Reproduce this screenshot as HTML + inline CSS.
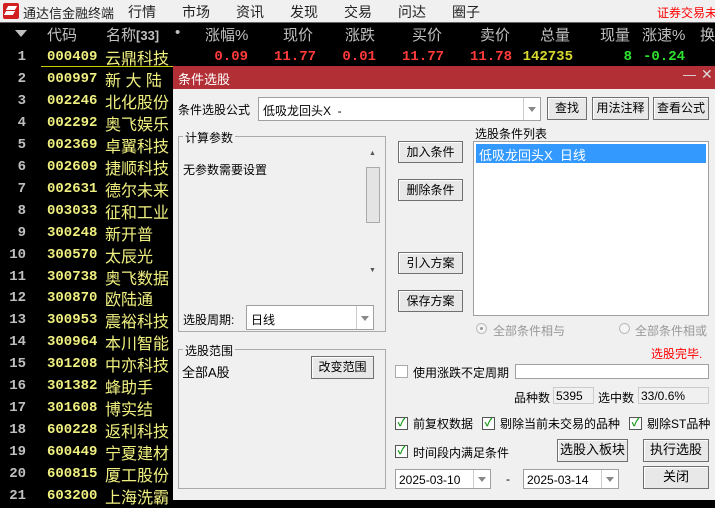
<!DOCTYPE html>
<html><head><meta charset="utf-8"><style>
*{margin:0;padding:0;box-sizing:border-box}
body{width:715px;height:504px;overflow:hidden;background:#000;font-family:"Liberation Sans","Noto Sans CJK SC",sans-serif;position:relative}
.a{position:absolute;white-space:nowrap}
.menu{left:0;top:0;width:715px;height:22px;background:#f0f0f0;font-size:13px;color:#222}
.hdr{font-size:15px;color:#c0c0c0}
.num{font-family:"Liberation Mono","DejaVu Sans Mono",monospace;font-weight:bold;font-size:14px}
.r{text-align:right}
.dlg{left:173px;top:66px;width:542px;height:434px;background:#f0f0f0;font-size:12px;color:#000}
.btn{position:absolute;background:#e8e8e8;border:1px solid #707070;box-shadow:inset 1px 1px 0 #fff;font-size:12px;text-align:center;line-height:20px}
.box{position:absolute;border:1px solid #aaa}
.inp{position:absolute;background:#fff;border:1px solid #a0a0a0}
.dd{position:absolute;right:0;top:0;bottom:0;width:17px;border-left:1px solid #ccc}
.dd:after{content:"";position:absolute;left:4px;top:50%;margin-top:-2px;border-left:4px solid transparent;border-right:4px solid transparent;border-top:5px solid #888}
.cb{position:absolute;width:13px;height:13px;border:1px solid #555;background:#fff;color:#1a9a1a;font-size:11px;line-height:11px;text-align:center;font-weight:bold}
</style></head><body>
<div class="a menu">
 <div class="a" style="left:3px;top:3px;width:16px;height:16px;background:#d21f1f;border-radius:2px"></div>
 <div class="a" style="left:7px;top:6px;width:9px;height:4px;background:#fff;transform:skewX(-30deg)"></div>
 <div class="a" style="left:5px;top:11px;width:9px;height:4px;background:#fff;transform:skewX(-30deg)"></div>
 <span class="a" style="left:23px;top:3px">通达信金融终端</span>
 <span class="a" style="left:128px;top:2px;font-size:14px">行情</span>
 <span class="a" style="left:182px;top:2px;font-size:14px">市场</span>
 <span class="a" style="left:236px;top:2px;font-size:14px">资讯</span>
 <span class="a" style="left:290px;top:2px;font-size:14px">发现</span>
 <span class="a" style="left:344px;top:2px;font-size:14px">交易</span>
 <span class="a" style="left:398px;top:2px;font-size:14px">问达</span>
 <span class="a" style="left:452px;top:2px;font-size:14px">圈子</span>
 <span class="a" style="left:657px;top:4px;color:#f00;font-size:12px">证券交易未</span>
</div>
<div class="a" style="left:0;top:22px;width:715px;height:1px;background:#666"></div>
<div class="a" style="left:15px;top:30px;border-left:6px solid transparent;border-right:6px solid transparent;border-top:7px solid #c0c0c0"></div>
<span class="a hdr" style="left:47px;top:24px">代码</span>
<span class="a hdr" style="left:106px;top:24px">名称<span style="font-size:13px;font-weight:bold">[33]</span></span>
<span class="a hdr" style="left:175px;top:24px">•</span>
<span class="a hdr" style="left:205px;top:24px">涨幅%</span>
<span class="a hdr" style="left:283px;top:24px">现价</span>
<span class="a hdr" style="left:345px;top:24px">涨跌</span>
<span class="a hdr" style="left:412px;top:24px">买价</span>
<span class="a hdr" style="left:480px;top:24px">卖价</span>
<span class="a hdr" style="left:540px;top:24px">总量</span>
<span class="a hdr" style="left:600px;top:24px">现量</span>
<span class="a hdr" style="left:642px;top:24px">涨速%</span>
<span class="a hdr" style="left:700px;top:24px">换</span>
<div class="a num r" style="left:190px;top:49px;width:58px;color:#ff3b3b">0.09</div>
<div class="a num r" style="left:250px;top:49px;width:66px;color:#ff3b3b">11.77</div>
<div class="a num r" style="left:320px;top:49px;width:56px;color:#ff3b3b">0.01</div>
<div class="a num r" style="left:380px;top:49px;width:64px;color:#ff3b3b">11.77</div>
<div class="a num r" style="left:448px;top:49px;width:64px;color:#ff3b3b">11.78</div>
<div class="a num r" style="left:510px;top:49px;width:63px;color:#d8d830">142735</div>
<div class="a num r" style="left:590px;top:49px;width:42px;color:#2fe22f">8</div>
<div class="a num r" style="left:630px;top:49px;width:55px;color:#2fe22f">-0.24</div>
<div class="a" style="left:41px;top:66px;width:674px;height:1px;background:#c8c800"></div>
<div id="rows"></div>
<script>
var d=[["000409","云鼎科技"],["000997","新 大 陆"],["002246","北化股份"],["002292","奥飞娱乐"],["002369","卓翼科技"],["002609","捷顺科技"],["002631","德尔未来"],["003033","征和工业"],["300248","新开普"],["300570","太辰光"],["300738","奥飞数据"],["300870","欧陆通"],["300953","震裕科技"],["300964","本川智能"],["301208","中亦科技"],["301382","蜂助手"],["301608","博实结"],["600228","返利科技"],["600449","宁夏建材"],["600815","厦工股份"],["603200","上海洗霸"]];
var h="";for(var i=0;i<d.length;i++){var y=49+i*21.95;
h+='<div class="a num r" style="left:0;top:'+y+'px;width:26px;color:#c0c0c0">'+(i+1)+'</div>';
h+='<div class="a num" style="left:47px;top:'+y+'px;color:#f0f080">'+d[i][0]+'</div>';
h+='<div class="a" style="left:105px;top:'+(y-4)+'px;font-size:16px;color:#f0f080">'+d[i][1]+'</div>';}
document.getElementById("rows").innerHTML=h;
</script>
<div class="a dlg">
 <div class="a" style="left:0;top:0;width:542px;height:23px;background:#b12f35;color:#fff;font-size:13px;padding:3px 5px">条件选股
  <span class="a" style="left:510px;top:1px;color:#ddd">—</span><span class="a" style="left:528px;top:0px;color:#ddd;font-size:14px">✕</span></div>
 <span class="a" style="left:5px;top:35px">条件选股公式</span>
 <div class="inp" style="left:85px;top:31px;width:283px;height:24px"><span class="a" style="left:4px;top:4px">低吸龙回头X&nbsp; -</span><div class="dd"></div></div>
 <div class="btn" style="left:374px;top:31px;width:40px;height:23px">查找</div>
 <div class="btn" style="left:419px;top:31px;width:57px;height:23px">用法注释</div>
 <div class="btn" style="left:480px;top:31px;width:56px;height:23px">查看公式</div>
 <div class="box" style="left:5px;top:70px;width:208px;height:196px"></div>
 <span class="a" style="left:10px;top:63px;background:#f0f0f0;padding:0 2px">计算参数</span>
 <span class="a" style="left:10px;top:95px">无参数需要设置</span>
 <div class="a" style="left:193px;top:101px;width:14px;height:56px;background:#e4e4e4;border:1px solid #aaa"></div>
 <span class="a" style="left:196px;top:84px;font-size:7px;color:#555">▲</span>
 <span class="a" style="left:196px;top:201px;font-size:7px;color:#555">▼</span>
 <span class="a" style="left:10px;top:245px">选股周期:</span>
 <div class="inp" style="left:73px;top:239px;width:128px;height:25px"><span class="a" style="left:4px;top:5px">日线</span><div class="dd"></div></div>
 <div class="box" style="left:5px;top:283px;width:208px;height:140px"></div>
 <span class="a" style="left:10px;top:276px;background:#f0f0f0;padding:0 2px">选股范围</span>
 <span class="a" style="left:9px;top:296px;font-size:13px">全部A股</span>
 <div class="btn" style="left:138px;top:290px;width:63px;height:23px">改变范围</div>
 <div class="btn" style="left:225px;top:75px;width:65px;height:22px">加入条件</div>
 <div class="btn" style="left:225px;top:113px;width:65px;height:22px">删除条件</div>
 <div class="btn" style="left:225px;top:186px;width:65px;height:22px">引入方案</div>
 <div class="btn" style="left:225px;top:224px;width:65px;height:22px">保存方案</div>
 <span class="a" style="left:302px;top:59px">选股条件列表</span>
 <div class="inp" style="left:300px;top:75px;width:236px;height:175px"><div class="a" style="left:2px;top:2px;width:230px;height:19px;background:#3399ff;color:#fff;font-size:13px;padding:1px 3px">低吸龙回头X&nbsp; 日线</div></div>
 <div class="a" style="left:303px;top:257px;width:11px;height:11px;border-radius:50%;border:1px solid #bbb;background:#f4f4f4"><div class="a" style="left:3px;top:3px;width:3px;height:3px;border-radius:50%;background:#999"></div></div>
 <span class="a" style="left:320px;top:256px;color:#999">全部条件相与</span>
 <div class="a" style="left:446px;top:257px;width:11px;height:11px;border-radius:50%;border:1px solid #bbb;background:#f4f4f4"></div>
 <span class="a" style="left:462px;top:256px;color:#999">全部条件相或</span>
 <span class="a" style="left:478px;top:279px;color:#f00">选股完毕.</span>
 <div class="cb" style="left:222px;top:299px;border-color:#aaa"></div>
 <span class="a" style="left:240px;top:298px">使用涨跌不定周期</span>
 <div class="inp" style="left:342px;top:298px;width:194px;height:15px"></div>
 <span class="a" style="left:341px;top:323px">品种数</span>
 <div class="a" style="left:380px;top:321px;width:41px;height:17px;border:1px solid #ccc;padding:1px 2px">5395</div>
 <span class="a" style="left:425px;top:323px">选中数</span>
 <div class="a" style="left:465px;top:321px;width:71px;height:17px;border:1px solid #ccc;padding:1px 2px">33/0.6%</div>
 <div class="cb" style="left:222px;top:351px">✓</div><span class="a" style="left:240px;top:349px">前复权数据</span>
 <div class="cb" style="left:309px;top:351px">✓</div><span class="a" style="left:327px;top:349px">剔除当前未交易的品种</span>
 <div class="cb" style="left:456px;top:351px">✓</div><span class="a" style="left:474px;top:349px">剔除ST品种</span>
 <div class="cb" style="left:222px;top:379px">✓</div><span class="a" style="left:240px;top:378px">时间段内满足条件</span>
 <div class="btn" style="left:384px;top:373px;width:71px;height:23px;font-size:13px">选股入板块</div>
 <div class="btn" style="left:470px;top:373px;width:66px;height:23px;font-size:13px">执行选股</div>
 <div class="inp" style="left:222px;top:403px;width:96px;height:20px"><span class="a" style="left:3px;top:3px">2025-03-10</span><div class="dd"></div></div>
 <span class="a" style="left:333px;top:406px">-</span>
 <div class="inp" style="left:350px;top:403px;width:96px;height:20px"><span class="a" style="left:3px;top:3px">2025-03-14</span><div class="dd"></div></div>
 <div class="btn" style="left:470px;top:400px;width:66px;height:23px;font-size:13px">关闭</div>
</div>
</body></html>
